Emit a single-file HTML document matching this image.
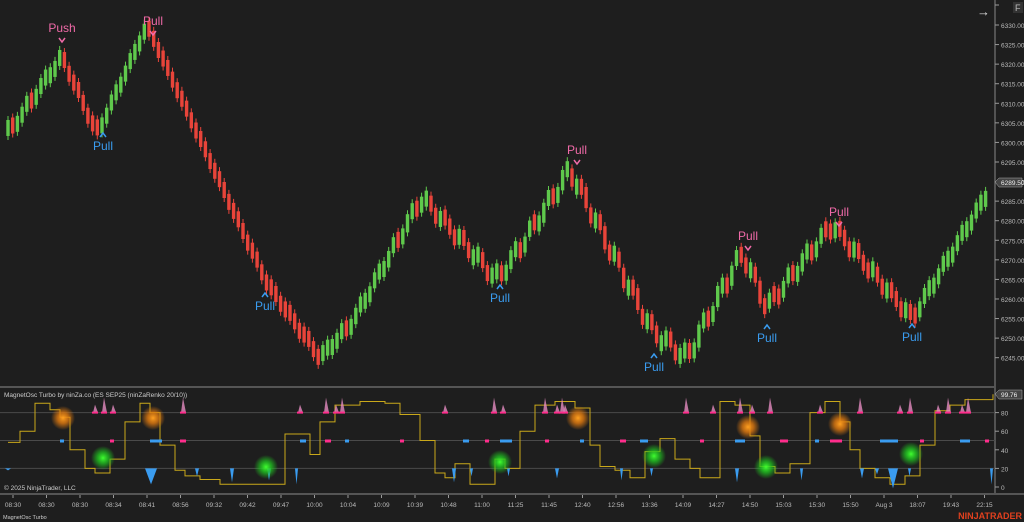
<!DOCTYPE html><html><head><meta charset="utf-8"><style>
html,body{margin:0;padding:0;background:#1e1e1e;width:1024px;height:522px;overflow:hidden;font-family:"Liberation Sans",sans-serif}
svg{display:block}
</style></head><body>
<svg id="s" width="1024" height="522" xmlns="http://www.w3.org/2000/svg" font-family="Liberation Sans, sans-serif">
<rect width="1024" height="522" fill="#1e1e1e"/>
<g id="g"></g>
</svg>
<script>
const NS="http://www.w3.org/2000/svg",g=document.getElementById('g');
function el(t,a,txt){const e=document.createElementNS(NS,t);for(const k in a)e.setAttribute(k,a[k]);if(txt!=null)e.textContent=txt;g.appendChild(e);return e;}
el('line',{x1:995,y1:0,x2:995,y2:494,stroke:'#888',"stroke-width":1});
el('rect',{x:0,y:386,width:995,height:2,fill:'#555'});
el('rect',{x:0,y:493,width:1024,height:2,fill:'#555'});
const Y=p=>25+(6330-p)*3.914;
for(let p=6245;p<=6330;p+=5){const y=Y(p);el('line',{x1:995,y1:y,x2:999,y2:y,stroke:'#999'});el('text',{x:1001,y:y+3,fill:'#bbb','font-size':6.5},p.toFixed(2));}
el('line',{x1:995,y1:5,x2:999,y2:5,stroke:'#999'});
el('rect',{x:1013,y:2,width:10,height:11,fill:'#333'});el('text',{x:1015,y:11,fill:'#bbb','font-size':9},'F');
el('text',{x:977,y:16,fill:'#ddd','font-size':13},'→');
const P=[[8,6303],[60,6322],[95,6302],[145,6330],[265,6264],[318,6245],[350,6254],[420,6286],[495,6265],[515,6272],[568,6293],[650,6252],[685,6245],[740,6272],[765,6258],[830,6279],[910,6255],[990,6289]];
function pr(x){for(let i=0;i<P.length-1;i++){if(x<=P[i+1][0]){const t=(x-P[i][0])/(P[i+1][0]-P[i][0]);return P[i][1]+t*(P[i+1][1]-P[i][1]);}}return P[P.length-1][1];}
let prev=pr(8);
for(let x=8;x<=990;x+=4.7){const j=Math.sin(x*1.7)*1.4+Math.sin(x*0.37)*1.0;const c=pr(x)+j;const up=c>=prev;let y1=Y(Math.max(c,prev)),y2=Y(Math.min(c,prev));if(y2-y1<16){const m=(y1+y2)/2;y1=m-8;y2=m+8;}
const col=up?'#5fc94c':'#e8443a';
el('line',{x1:x,y1:y1-4,x2:x,y2:y2+4,stroke:col,'stroke-width':1});
el('rect',{x:x-1.7,y:y1,width:3.4,height:y2-y1,fill:col});prev=c;}
el('path',{d:'M995 182 L999 178 L1022 178 L1022 187 L999 187 Z',fill:'#444',stroke:'#aaa','stroke-width':.5});
el('text',{x:1001,y:185,fill:'#eee','font-size':6.5},'6289.50');
const pk='#f06aa8',bl='#3a9cf0';
[[62,32,'Push',1],[153,25,'Pull',1],[577,154,'Pull',1],[748,240,'Pull',1],[839,216,'Pull',1]].forEach(a=>{el('text',{x:a[0],y:a[1],fill:pk,'font-size':12,'text-anchor':'middle'},a[2]);el('path',{d:`M${a[0]-3} ${a[1]+6} L${a[0]} ${a[1]+10} L${a[0]+3} ${a[1]+6}`,stroke:pk,fill:'none','stroke-width':1.5});});
[[103,150,'Pull'],[265,310,'Pull'],[500,302,'Pull'],[654,371,'Pull'],[767,342,'Pull'],[912,341,'Pull']].forEach(a=>{el('text',{x:a[0],y:a[1],fill:bl,'font-size':12,'text-anchor':'middle'},a[2]);el('path',{d:`M${a[0]-3} ${a[1]-13} L${a[0]} ${a[1]-17} L${a[0]+3} ${a[1]-13}`,stroke:bl,fill:'none','stroke-width':1.5});});
const O=v=>487-v*0.93;
[80,50,20].forEach(v=>el('line',{x1:0,y1:O(v),x2:995,y2:O(v),stroke:'#4a4a4a'}));
[80,60,40,20,0].forEach(v=>{el('line',{x1:995,y1:O(v),x2:999,y2:O(v),stroke:'#999'});el('text',{x:1001,y:O(v)+3,fill:'#bbb','font-size':6.5},v);});
el('text',{x:4,y:397,fill:'#ccc','font-size':6.5},'MagnetOsc Turbo by ninZa.co (ES SEP25 (ninZaRenko 20/10))');
el('text',{x:4,y:490,fill:'#ccc','font-size':6.5},'© 2025 NinjaTrader, LLC');
el('text',{x:3,y:519,fill:'#ccc','font-size':5.5},'MagnetOsc Turbo');
el('text',{x:1022,y:519,fill:'#e0401e','font-size':9,'font-weight':'bold','text-anchor':'end'},'NINJATRADER');
const L=[[8,48],[20,60],[35,90],[50,83],[60,75],[70,40],[85,20],[95,15],[110,30],[125,70],[140,90],[150,80],[160,45],[175,18],[185,12],[200,8],[220,3],[265,3],[285,57],[295,57],[310,35],[320,70],[335,88],[360,92],[385,90],[400,78],[420,50],[435,15],[445,10],[455,25],[470,3],[485,3],[495,30],[505,20],[520,60],[535,88],[555,92],[575,85],[590,45],[600,22],[615,18],[630,10],[645,38],[660,52],[675,30],[690,20],[700,10],[720,92],[735,88],[750,55],[760,22],[775,15],[790,25],[810,80],[825,92],[840,70],[850,40],[860,20],[875,10],[890,3],[905,12],[920,45],[935,82],[950,88],[965,94],[993,99.76]];
let d='';L.forEach((p,i)=>{const x=p[0],y=O(p[1]);d+=i?`H${x}V${y}`:`M${x} ${y}`;});
el('path',{d:d,stroke:'#c9a81a',fill:'none','stroke-width':1});
[95,104,113,183,300,326,336,342,445,494,503,545,557,562,565,686,713,740,752,770,820,860,900,910,938,948,962,968].forEach((x,i)=>{const h=8+(i*7)%14;el('path',{d:`M${x-2} ${O(80)} L${x} ${O(80)-h} L${x+3} ${O(80)}Z`,fill:'#e58bc0','fill-opacity':.8});el('rect',{x:x-3,y:O(80)-1,width:6,height:2,fill:'#ff2d8c'});});
[[5,6,2],[104,10,0],[145,12,16],[195,4,8],[230,4,14],[267,4,12],[295,3,16],[452,4,14],[470,3,8],[507,3,8],[555,4,10],[620,3,12],[650,3,8],[735,4,14],[800,3,12],[860,4,10],[875,4,6],[888,10,20],[908,3,8],[990,3,16]].forEach(a=>{const x=a[0];el('path',{d:`M${x} ${O(20)} L${x+a[1]} ${O(20)} L${x+a[1]/2} ${O(20)+a[2]}Z`,fill:bl});});
[[60,4],[110,4],[150,12],[180,6],[300,6],[325,6],[345,4],[400,4],[463,6],[485,4],[500,12],[545,4],[580,4],[620,6],[640,8],[700,4],[735,10],[780,8],[815,4],[830,12],[880,18],[920,4],[960,10],[985,4]].forEach((a,i)=>el('rect',{x:a[0],y:O(50)-1,width:a[1],height:3,fill:i%2?'#ff2d8c':bl}));
const defs=document.createElementNS(NS,'defs');defs.innerHTML='<radialGradient id="go"><stop offset="0" stop-color="#ffa020"/><stop offset=".45" stop-color="#e07a10" stop-opacity=".8"/><stop offset="1" stop-color="#e07a10" stop-opacity="0"/></radialGradient><radialGradient id="gg"><stop offset="0" stop-color="#40ff30"/><stop offset=".45" stop-color="#20c020" stop-opacity=".8"/><stop offset="1" stop-color="#20c020" stop-opacity="0"/></radialGradient>';document.getElementById('s').prepend(defs);
[[63,418],[153,418],[578,418],[748,427],[840,424]].forEach(a=>el('circle',{cx:a[0],cy:a[1],r:12,fill:'url(#go)'}));
[[103,458],[266,467],[500,462],[654,456],[766,467],[911,454]].forEach(a=>el('circle',{cx:a[0],cy:a[1],r:12,fill:'url(#gg)'}));
el('path',{d:'M995 394 L999 390 L1022 390 L1022 399 L999 399Z',fill:'#444',stroke:'#aaa','stroke-width':.5});
el('text',{x:1001,y:397,fill:'#eee','font-size':6.5},'99.76');
['08:30','08:30','08:30','08:34','08:41','08:56','09:32','09:42','09:47','10:00','10:04','10:09','10:39','10:48','11:00','11:25','11:45','12:40','12:56','13:36','14:09','14:27','14:50','15:03','15:30','15:50','Aug 3','18:07','19:43','22:15'].forEach((t,i)=>{const x=13+i*33.5;el('line',{x1:x,y1:495,x2:x,y2:498,stroke:'#999'});el('text',{x:x,y:507,fill:'#bbb','font-size':6.5,'text-anchor':'middle'},t);});
</script>
</body></html>
